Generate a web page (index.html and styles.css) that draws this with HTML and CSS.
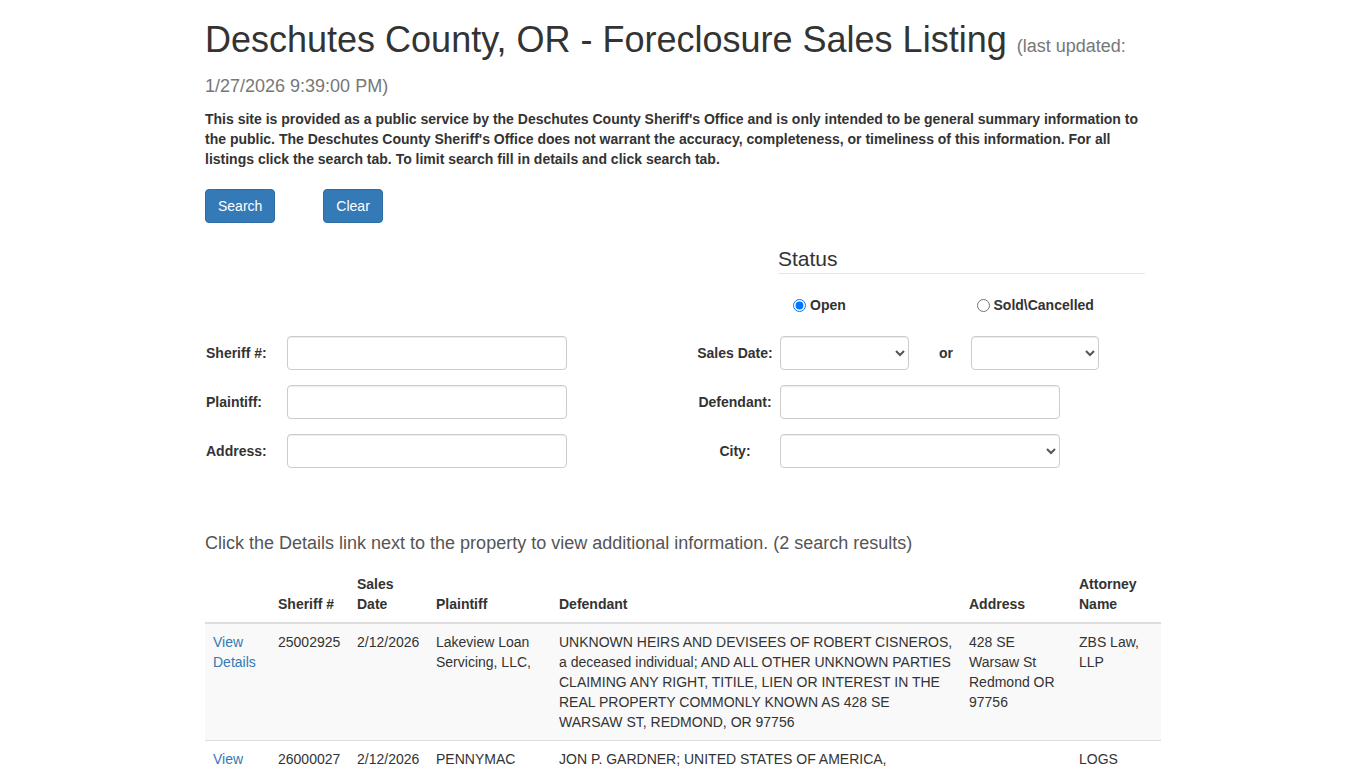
FILE: index.html
```html
<!DOCTYPE html>
<html lang="en">
<head>
<meta charset="utf-8">
<title>Deschutes County, OR - Foreclosure Sales Listing</title>
<link rel="stylesheet" href="styles.css">
</head>
<body>
<div class="container">
  <h1 class="title">Deschutes County, OR - Foreclosure Sales Listing <small>(last updated: 1/27/2026 9:39:00 PM)</small></h1>
  <p class="intro">This site is provided as a public service by the Deschutes County Sheriff's Office and is only intended to be general summary information to the public. The Deschutes County Sheriff's Office does not warrant the accuracy, completeness, or timeliness of this information. For all listings click the search tab. To limit search fill in details and click search tab.</p>

  <div class="actions">
    <button class="btn" type="button">Search</button>
    <button class="btn" type="button">Clear</button>
  </div>

  <div class="status">
    <div class="legend">Status</div>
    <div class="radios">
      <label class="radio"><input type="radio" name="status" checked> Open</label>
      <label class="radio"><input type="radio" name="status"> Sold\Cancelled</label>
    </div>
  </div>

  <div class="form-grid">
    <label class="lbl-left">Sheriff #:</label>
    <input class="form-control w280" type="text">
    <span></span>
    <label class="lbl-right">Sales Date:</label>
    <div class="date-range">
      <select class="form-control sel-date"><option></option></select>
      <span class="or">or</span>
      <select class="form-control sel-date2"><option></option></select>
    </div>

    <label class="lbl-left">Plaintiff:</label>
    <input class="form-control w280" type="text">
    <span></span>
    <label class="lbl-right">Defendant:</label>
    <input class="form-control w280" type="text">

    <label class="lbl-left">Address:</label>
    <input class="form-control w280" type="text">
    <span></span>
    <label class="lbl-right">City:</label>
    <select class="form-control w280"><option></option></select>
  </div>

  <h4 class="results-note">Click the Details link next to the property to view additional information. (2 search results)</h4>

  <table class="table">
    <colgroup>
      <col class="c1"><col class="c2"><col class="c3"><col class="c4"><col class="c5"><col class="c6"><col class="c7">
    </colgroup>
    <thead>
      <tr>
        <th></th>
        <th>Sheriff #</th>
        <th>Sales Date</th>
        <th>Plaintiff</th>
        <th>Defendant</th>
        <th>Address</th>
        <th>Attorney Name</th>
      </tr>
    </thead>
    <tbody>
      <tr>
        <td><a href="#">View Details</a></td>
        <td>25002925</td>
        <td>2/12/2026</td>
        <td>Lakeview Loan Servicing, LLC,</td>
        <td>UNKNOWN HEIRS AND DEVISEES OF ROBERT CISNEROS, a deceased individual; AND ALL OTHER UNKNOWN PARTIES CLAIMING ANY RIGHT, TITILE, LIEN OR INTEREST IN THE REAL PROPERTY COMMONLY KNOWN AS 428 SE WARSAW ST, REDMOND, OR 97756</td>
        <td>428 SE Warsaw St Redmond OR 97756</td>
        <td>ZBS Law, LLP</td>
      </tr>
      <tr>
        <td><a href="#">View Details</a></td>
        <td>26000027</td>
        <td>2/12/2026</td>
        <td>PENNYMAC LOAN SERVICES, LLC</td>
        <td>JON P. GARDNER; UNITED STATES OF AMERICA, DEPARTMENT OF THE TREASURY - INTERNAL REVENUE SERVICE</td>
        <td></td>
        <td>LOGS Legal Group LLP</td>
      </tr>
    </tbody>
  </table>
</div>
</body>
</html>
```

FILE: styles.css
```css
* {
  box-sizing: border-box;
}

html, body {
  margin: 0;
  padding: 0;
}

body {
  font-family: "Liberation Sans", Arial, Helvetica, sans-serif;
  font-size: 14px;
  line-height: 1.42857143;
  color: #333;
  background: #fff;
}

.container {
  width: 956px;
  margin: 0 auto;
}

.title {
  margin: 20px 0 10px;
  font-size: 36px;
  font-weight: normal;
  line-height: 1.1;
  color: #333;
}

.title small {
  font-size: 18px;
  font-weight: normal;
  color: #777;
}

.intro {
  margin: 0 0 10px;
  font-weight: bold;
}

.actions {
  display: flex;
  gap: 48px;
  margin-top: 20px;
}

.btn {
  display: inline-block;
  padding: 6px 12px;
  font-family: inherit;
  font-size: 14px;
  line-height: 20px;
  color: #fff;
  background-color: #337ab7;
  border: 1px solid #2e6da4;
  border-radius: 4px;
  cursor: pointer;
}

.status {
  width: 367px;
  margin: 26px 0 0 573px;
}

.legend {
  font-size: 21px;
  line-height: 20px;
  padding-bottom: 4px;
  border-bottom: 1px solid #e5e5e5;
  color: #333;
}

.radios {
  display: flex;
  margin-top: 21px;
}

.radio {
  flex: 1 1 50%;
  padding: 0 15px;
  font-weight: bold;
  line-height: 20px;
  display: flex;
  align-items: center;
}

.radio input {
  width: 13px;
  height: 13px;
  margin: 0 4px 0 0;
}

.form-grid {
  display: grid;
  grid-template-columns: 82px 280px 123px 90px 1fr;
  row-gap: 15px;
  align-items: center;
  margin-top: 21px;
}

.lbl-left {
  font-weight: bold;
  padding-left: 1px;
}

.lbl-right {
  font-weight: bold;
  text-align: center;
}

.form-control {
  display: block;
  height: 34px;
  padding: 6px 12px;
  font-family: inherit;
  font-size: 14px;
  line-height: 20px;
  color: #555;
  background-color: #fff;
  border: 1px solid #ccc;
  border-radius: 4px;
  box-shadow: inset 0 1px 1px rgba(0, 0, 0, 0.075);
}

select.form-control {
  padding: 6px 8px;
}

.w280 {
  width: 280px;
}

.date-range {
  display: flex;
  align-items: center;
}

.sel-date {
  width: 129px;
}

.sel-date2 {
  width: 128px;
}

.or {
  font-weight: bold;
  margin: 0 18px 0 30px;
}

.results-note {
  margin: 66px 0 12px;
  font-size: 18px;
  font-weight: normal;
  line-height: 1.1;
  color: #555;
}

.table {
  width: 956px;
  table-layout: fixed;
  border-collapse: collapse;
  border-spacing: 0;
}

.c1 { width: 65px; }
.c2 { width: 79px; }
.c3 { width: 79px; }
.c4 { width: 123px; }
.c5 { width: 410px; }
.c6 { width: 110px; }
.c7 { width: 90px; }

.table th {
  padding: 8px;
  text-align: left;
  vertical-align: bottom;
  font-weight: bold;
  line-height: 20px;
  border-bottom: 2px solid #ddd;
}

.table td {
  padding: 8px;
  vertical-align: top;
  line-height: 20px;
  border-top: 1px solid #ddd;
}

.table tbody tr:nth-child(odd) {
  background-color: #f9f9f9;
}

.table thead + tbody tr:first-child td {
  border-top: 0;
}

.table a {
  color: #337ab7;
  text-decoration: none;
}
```
